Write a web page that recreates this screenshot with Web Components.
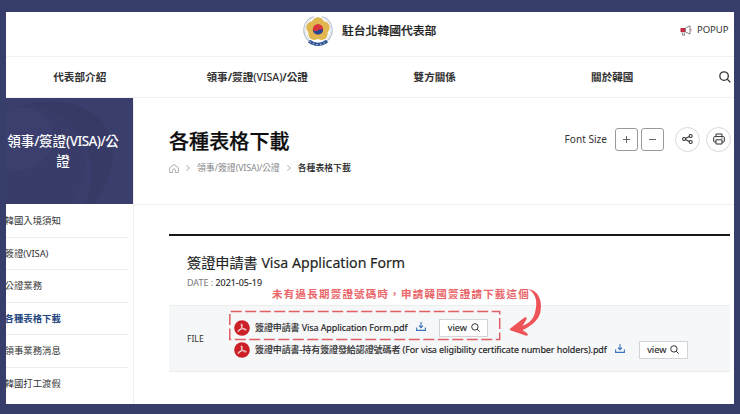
<!DOCTYPE html>
<html lang="zh-Hant">
<head>
<meta charset="utf-8">
<title>駐台北韓國代表部</title>
<style>
html,body{margin:0;height:100%}
body{width:740px;height:414px;overflow:hidden;background:#373e6c;font-family:"Noto Sans","Noto Sans CJK TC",sans-serif;color:#222}
</style>
</head>
<body>
<app-page></app-page>
<script>
const define=(name,html)=>customElements.define(name,class extends HTMLElement{
  constructor(){super();const t=document.createElement('template');t.innerHTML='<style>*{box-sizing:border-box}svg{display:block;flex:none;overflow:visible}i{font-style:normal}</style>'+html;
  this.attachShadow({mode:'open'}).append(t.content.cloneNode(true));}
});

define('site-header',`<style>
:host{display:flex;height:45px;border-bottom:1px solid #f1f1f2;align-items:center;padding:0 5.500px 8px 297px;box-sizing:border-box}
b{font-size:11.8px;font-weight:500;line-height:20px;margin-left:9px;white-space:nowrap;-webkit-text-stroke:.2px}
.pop{margin-left:auto;font-size:9.5px;line-height:16px;display:flex;gap:5px;align-items:center;color:#333}
</style>
<svg width="30" height="31" viewBox="0 0 30 31">
<path d="M11 1.800C-1 5-2 19 6 26M19 1.800c12 3.200 13 17.200 5 24.200" fill="none" stroke="#b4bdcc" stroke-width="1.100"/>
<path d="M9 3.800C1 8 0 18 6.500 24M21 3.800c8 4.200 9 14.200 2.500 20.200" fill="none" stroke="#e3e7ed" stroke-width="1.200"/>
<g fill="#e0b650"><circle cx="15" cy="8.500" r="6.200"/><circle cx="20.500" cy="12.500" r="6.200"/><circle cx="18.500" cy="18.800" r="6.200"/><circle cx="11.500" cy="18.800" r="6.200"/><circle cx="9.500" cy="12.500" r="6.200"/><circle cx="15" cy="14.500" r="9.500"/></g>
<circle cx="15" cy="14.300" r="5.200" fill="#d9343a"/><path d="M9.900 14c.6 2.600 3.200 2.700 5.100 1.300 1.900-1.500 4.500-1.400 5.100.3A5.200 5.200 0 0 1 9.900 14z" fill="#234a94"/>
<path d="M6 26c5.500 4.500 12.500 4.500 18 0" fill="none" stroke="#2e5591" stroke-width="3.400"/><path d="M6.500 26.600c5.500 4 11.500 4 17 0" fill="none" stroke="#c5d2e2" stroke-width="1" stroke-dasharray="1.500 2.200"/>
</svg>
<b>駐台北韓國代表部</b>
<div class="pop"><svg width="12" height="11" viewBox="0 0 12 11"><path d="M.5 3h5v4h-5z" fill="#c52b43"/><path d="M5.500 3L10 .7v8.400L5.500 7z" fill="#fff" stroke="#777" stroke-width=".9"/><path d="M2 7.200l.7 3h2L4 7.200" fill="#fff" stroke="#766" stroke-width=".8"/><path d="M10.500 3.800c1 .2 1 2 0 2.200" fill="none" stroke="#b55" stroke-width=".8"/></svg><span>POPUP</span></div>`);

define('main-nav',`<style>
:host{display:flex;height:41px;border-bottom:1px solid #f1f1f2;align-items:center;box-sizing:border-box;overflow:hidden;padding-right:3px}
nav{display:flex;margin-left:-15px;flex:none;width:710px}
span{flex:1;text-align:center;font-size:10.6px;font-weight:700;line-height:18px;color:#333}
i{font-weight:500;letter-spacing:-.1px}
svg{margin-left:auto}
</style><nav><span>代表部介紹</span><span>領事/簽證<i>(VISA)</i>/公證</span><span>雙方關係</span><span>關於韓國</span></nav>
<svg width="12" height="12" viewBox="0 0 13 13" fill="none" stroke="#333" stroke-width="1.400"><circle cx="5.500" cy="5.500" r="4.600"/><path d="M9 9l3.300 3.300"/></svg>`);

define('side-menu',`<style>
:host{display:block;width:128px;flex:none;overflow:hidden;border-right:1px solid #eee;box-sizing:border-box}
h2{margin:0 -1px 0 0;height:106px;background:#3a3e6c;position:relative;overflow:hidden;color:#fff;font-weight:500;font-size:13.5px;line-height:19.500px;display:flex;align-items:center;justify-content:center;text-align:center;padding:1px 14px 0 0}
h2 svg{position:absolute;left:0;top:0}h2 span{position:relative;white-space:nowrap}h2 i{letter-spacing:-.55px}
ul{list-style:none;margin:1px 5px 0 0;padding:0}
li{height:32.6px;border-bottom:1px solid #ececed;font-size:9.4px;line-height:31px;white-space:nowrap;text-indent:-1.500px;color:#333}
li i{letter-spacing:-.1px}
li.on{color:#1f467e;font-weight:700}li:last-child{border:0}
</style>
<h2><svg width="128" height="106" viewBox="0 0 128 106"><path d="M0 14C35-4 88 0 103 35c9 23 1 49-16 71h-7c11-31 5-65-16-79C46 10 20 5 0 14z" fill="#373a65"/><path d="M0 12C34 2 70 16 77 49c7 25-2 43-12 57H0z" fill="#393c68"/><path d="M0 14c18-12 46 0 46 25 0 26-21 34-46 34z" fill="#3c3f6e"/></svg><span>領事<i>/</i>簽證<i>(VISA)/</i>公<br>證</span></h2>
<ul><li>韓國入境須知</li><li>簽證<i>(VISA)</i></li><li>公證業務</li><li class="on">各種表格下載</li><li>領事業務消息</li><li>韓國打工渡假</li></ul>`);

define('round-button',`<style>:host{display:flex;width:25px;height:25px;box-sizing:border-box;border:1px solid #d9d9dc;border-radius:50%;align-items:center;justify-content:center}</style><slot></slot>`);
define('size-button',`<style>:host{display:flex;width:23px;height:23px;box-sizing:border-box;border:1px solid #999;border-radius:3px;align-items:center;justify-content:center}</style><slot></slot>`);

define('page-heading',`<style>
:host{display:flex;justify-content:space-between;height:106px;padding:28px 3px 0 35px;box-sizing:border-box}
h1{margin:0;padding:2px 0 0;font-size:20px;line-height:28px;font-weight:500;color:#0c0c0c;letter-spacing:.1px;-webkit-text-stroke:.25px}
.crumb{display:flex;align-items:center;font-size:8.85px;line-height:14px;margin-top:5px;color:#888;white-space:nowrap}
.crumb b{font-weight:500;color:#222}.crumb i{letter-spacing:-.15px}
.tools{display:flex;align-items:center;height:26px;font-size:10.1px;color:#333}
</style>
<div><h1>各種表格下載</h1><div class="crumb">
<svg width="10" height="9" viewBox="0 0 10 9" fill="none" stroke="#999" stroke-width=".8"><path d="M.6 8.500V3.800L5 .5l4.400 3.300v4.700H6.400V6.300a1.400 1.400 0 0 0-2.800 0v2.200z"/></svg>
<svg style="margin:0 7px 0 7px" width="4" height="6" viewBox="0 0 4 6" fill="none" stroke="#999" stroke-width=".8"><path d="M.3.3L3.500 3 .3 5.700"/></svg>
<span>領事/簽證<i>(VISA)/</i>公證</span>
<svg style="margin:0 7px 0 7px" width="4" height="6" viewBox="0 0 4 6" fill="none" stroke="#999" stroke-width=".8"><path d="M.3.3L3.500 3 .3 5.700"/></svg>
<b>各種表格下載</b></div></div>
<div class="tools"><span style="margin-right:8px">Font Size</span>
<size-button><svg width="9" height="9" viewBox="0 0 9 9" stroke="#666" stroke-width="1"><path d="M1 4.500h7M4.500 1v7"/></svg></size-button>
<size-button style="margin:0 11px 0 3px"><svg width="9" height="9" viewBox="0 0 9 9" stroke="#666" stroke-width="1"><path d="M1 4.500h7"/></svg></size-button>
<round-button style="margin-right:6px"><svg width="11" height="10" viewBox="0 0 11 10" fill="none" stroke="#333" stroke-width="1.100"><circle cx="2.100" cy="5" r="1.500"/><circle cx="8.700" cy="2" r="1.500"/><circle cx="8.700" cy="8" r="1.500"/><path d="M3.500 4.400l3.800-1.800M3.500 5.600l3.800 1.800"/></svg></round-button>
<round-button><svg width="12" height="12" viewBox="0 0 12 12" fill="none" stroke="#333" stroke-width="1"><path d="M3 3.500V1h6v2.500M3 9H1.500a.8.800 0 0 1-.8-.8V4.400a.8.800 0 0 1 .8-.8h9a.8.800 0 0 1 .8.800v3.800a.8.800 0 0 1-.8.800H9M3 6.800h6V11H3zM8.500 5.200h1"/></svg></round-button></div>`);

define('file-row',`<style>
:host{display:flex;align-items:center;height:22px;font-size:9px;color:#222;white-space:nowrap}
span{line-height:16px;letter-spacing:-.095px;-webkit-text-stroke:.15px}
.view{display:flex;align-items:center;justify-content:center;gap:4px;width:49px;height:18px;border:1px solid #d2d4d6;background:#fff;font-size:9.2px;box-sizing:border-box;-webkit-text-stroke:.1px}
</style>
<svg style="margin-right:5px" width="16" height="16" viewBox="0 0 16 16"><circle cx="8" cy="8" r="7.800" fill="#cb2028"/><path d="M7.200 4.200c.8-1 1.600.4.700 2.500C7 9 5 12 4 11.500c-.9-.7 1.500-2.200 3.900-2.600 2.400-.4 4.400 0 4.200.9-.3.900-2.500-.1-4-2.400-.8-1.200-1.200-2.500-.9-3.200z" fill="none" stroke="#fff" stroke-width=".8"/></svg>
<span><slot></slot></span>
<svg style="margin:0 13.500px 2px 8.500px" width="10" height="9" viewBox="0 0 10 9" fill="none" stroke="#3873bb" stroke-width="1.100"><path d="M.6 5.500v2.900h8.800V5.500M5 0v5.400M3 3.600l2 2 2-2"/></svg>
<div class="view">view<svg width="9" height="9" viewBox="0 0 9 9" fill="none" stroke="#333" stroke-width="1"><circle cx="3.900" cy="3.900" r="3.200"/><path d="M6.200 6.200l2.400 2.400"/></svg></div>`);

define('call-out',`<style>
:host{position:absolute;left:0;top:0;width:600px;height:170px;pointer-events:none}
p{position:absolute;left:138px;top:81px;margin:0;font-size:10.5px;line-height:16px;letter-spacing:1.230px;font-weight:700;color:#e9666a;white-space:nowrap}
svg{position:absolute;left:0;top:0}
</style><p>未有過長期簽證號碼時，申請韓國簽證請下載這個</p>
<svg width="600" height="170" viewBox="134 205 600 170"><path d="M229.800 339.600V311.500H499.700V339.600z" fill="none" stroke="#e15e62" stroke-width="1.500" stroke-dasharray="11 3.500"/>
<path d="M528.500 289.300C538 290 543 301 540.300 312.500 538.500 319.500 532 326 522.500 330l4.600 3.200c1.600 1.500.3 3-1.600 2.400L511 330.500c-1.500-.5-1.600-1.500-.4-2.200l13.600-10.600c1.700-1.200 3.300 0 2.300 1.700L522.500 325.800c7-2.500 11-7 12.500-13.300C538 302 536 293.500 528.500 289.300z" fill="#ee5357"/></svg>`);

define('document-view',`<style>
:host{display:block;position:relative;padding:29px 4px 0 35px;height:199px;box-sizing:border-box}
article{border-top:2px solid #191919}
h3{margin:17px 0 0 18px;font-size:14.15px;line-height:20px;font-weight:400;color:#222;white-space:nowrap;-webkit-text-stroke:.15px}
.date{margin:3px 0 0 18px;font-size:8.95px;line-height:14px;color:#777}.date b{font-weight:400;color:#222;-webkit-text-stroke:.1px}
.files{height:67px;margin-top:15px;display:flex;align-items:center;background:#f6f7f9;border-top:1px solid #eceded;border-bottom:1px solid #ececee;padding-left:18px}
.files>span{font-size:8.6px;width:47px;color:#333}
</style><article><h3>簽證申請書 Visa Application Form</h3><div class="date">DATE : <b>2021-05-19</b></div>
<div class="files"><span>FILE</span><div><file-row>簽證申請書 Visa Application Form.pdf</file-row><file-row>簽證申請書-持有簽證發給認證號碼者 (For visa eligibility certificate number holders).pdf</file-row></div></div></article><call-out></call-out>`);

define('app-page',`<style>
:host{display:block;padding:12px 6px 0}
main{height:391.500px;background:#fff;overflow:hidden}
.body{display:flex}section{flex:1;min-width:0}
.rule{height:1px;background:#efeff0}
</style><main><site-header></site-header><main-nav></main-nav><div class="body"><side-menu></side-menu><section><page-heading></page-heading><div class="rule"></div><document-view></document-view></section></div></main>`);
</script>
</body>
</html>
